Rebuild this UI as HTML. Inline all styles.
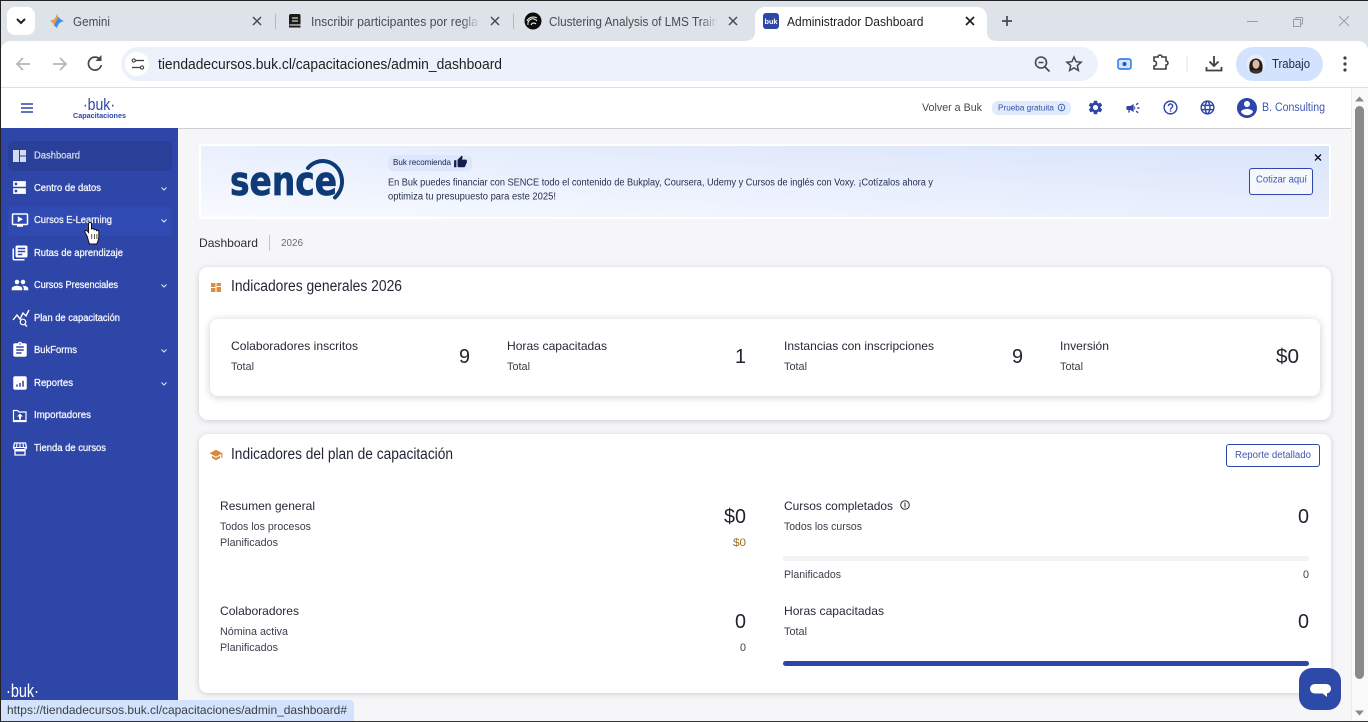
<!DOCTYPE html>
<html lang="es"><head><meta charset="utf-8"><title>Administrador Dashboard</title>
<style>
html,body{margin:0;padding:0;width:1368px;height:722px;overflow:hidden;background:#fff}
svg{display:block}
text{font-family:"Liberation Sans",sans-serif;white-space:pre}
.s{font-size:10px;font-weight:400;fill:#f2f4fc;stroke:#f2f4fc;stroke-width:.3px}
.l{font-size:12px;fill:#252a38}
.m{font-size:10.8px;fill:#3b3f4b}
.n{font-size:20px;fill:#20242e}
.tab{font-size:13px;fill:#4a4c50}
</style></head><body>
<svg width="1368" height="722" viewBox="0 0 1368 722" xmlns="http://www.w3.org/2000/svg">
<defs>
<linearGradient id="bn" x1="0" y1="1" x2="1" y2="0"><stop offset="0" stop-color="#f8faff"/><stop offset="1" stop-color="#d9e4fb"/></linearGradient>
<linearGradient id="fade1"><stop offset="0" stop-color="#dee3ea" stop-opacity="0"/><stop offset="1" stop-color="#dee3ea"/></linearGradient>
</defs>
<!-- tab strip -->
<rect width="1368" height="722" fill="#dee3ea"/>
<rect x="0" y="0" width="1368" height="1" fill="#222"/>
<rect x="1" y="41" width="1367" height="47" fill="#fff"/>
<path d="M1 41h10a10 10 0 0 0-10 8z" fill="#dee3ea"/>
<path d="M1368 41h-10a10 10 0 0 1 10 8z" fill="#dee3ea"/>
<rect x="7" y="7" width="28" height="28" rx="8" fill="#fff"/>
<path d="M17 19l4 4 4-4" fill="none" stroke="#1f1f1f" stroke-width="2"/>
<!-- gemini -->
<path d="M57 14c.8 4 3 6.200 7 7-4 .8-6.200 3-7 7-.8-4-3-6.200-7-7 4-.8 6.200-3 7-7z" fill="#3d8ef0"/>
<path d="M57 14c.8 2 1 2.500 1.500 3L54 25.500c-.8-2-2-3.800-4-4.500 4-.8 6.200-3 7-7z" fill="#ef9a3c"/>
<path d="M58.500 17l-4.500 8.500 3 2.500c.8-4 3-6.200 7-7-2-.5-4-2-5.500-4z" fill="#3d8ef0"/>
<text class="tab" x="73" y="26" textLength="37" lengthAdjust="spacingAndGlyphs">Gemini</text>
<path d="M253 17l8 8m0-8l-8 8" stroke="#4a4c50" stroke-width="1.500"/>
<rect x="275" y="14" width="1" height="15" fill="#b5b9bf"/>
<!-- notebook tab -->
<path d="M291 14h8a1.500 1.500 0 0 1 1.500 1.500V27.500h-11.500v-11.500a2 2 0 0 1 2-2z" fill="#1a1a1a"/>
<path d="M292 18h6M292 21h6M289.500 25h11" stroke="#fff" stroke-width="1.100"/>
<text class="tab" x="311" y="26" textLength="173" lengthAdjust="spacingAndGlyphs">Inscribir participantes por reglas</text>
<rect x="462" y="12" width="18" height="20" fill="url(#fade1)"/><rect x="479" y="12" width="12" height="20" fill="#dee3ea"/>
<path d="M491 17l8 8m0-8l-8 8" stroke="#4a4c50" stroke-width="1.500"/>
<rect x="513" y="14" width="1" height="15" fill="#b5b9bf"/>
<!-- clustering tab -->
<circle cx="533" cy="21" r="8.500" fill="#0b0b0b"/>
<path d="M528 25a5 5 0 0 1 9-4M531 25a3 3 0 0 1 5-1M527 21a7 7 0 0 1 10-3" fill="none" stroke="#fff" stroke-width="1"/>
<text class="tab" x="549" y="26" textLength="185" lengthAdjust="spacingAndGlyphs">Clustering Analysis of LMS Training</text>
<rect x="700" y="12" width="18" height="20" fill="url(#fade1)"/><rect x="717" y="12" width="20" height="20" fill="#dee3ea"/>
<path d="M729 17l8 8m0-8l-8 8" stroke="#4a4c50" stroke-width="1.500"/>
<!-- active tab -->
<path d="M745 41c6 0 10-3 10-9v-15a10 10 0 0 1 10-10h212a10 10 0 0 1 10 10v15c0 6 4 9 10 9z" fill="#fff"/>
<rect x="763" y="13" width="16" height="16" rx="3" fill="#2e46a7"/>
<text x="764.500" y="24" font-size="7.500" font-weight="700" fill="#fff" textLength="13" lengthAdjust="spacingAndGlyphs">buk</text>
<text x="787" y="26" font-size="13" fill="#1f1f1f" textLength="136.500" lengthAdjust="spacingAndGlyphs">Administrador Dashboard</text>
<path d="M966 17l8 8m0-8l-8 8" stroke="#1f1f1f" stroke-width="1.700"/>
<path d="M1002 21h10M1007 16v10" stroke="#4d4453" stroke-width="1.700"/>
<!-- window controls -->
<rect x="1247" y="21" width="11" height="1" fill="#9a9da2"/>
<path d="M1293.500 19.500h7v7h-7zM1296 19v-1.500h6.500v6.500h-2" fill="none" stroke="#9a9da2"/>
<path d="M1339 16l10 10m0-10l-10 10" stroke="#9a9da2"/>
<!-- toolbar -->
<path d="M30 64H17m6-6l-6 6 6 6" fill="none" stroke="#b3b6bb" stroke-width="1.700"/>
<path d="M53 64h13m-6-6l6 6-6 6" fill="none" stroke="#b3b6bb" stroke-width="1.700"/>
<path d="M100 59.500a6.500 6.500 0 1 0 1.300 5.500" fill="none" stroke="#45474a" stroke-width="1.700"/><path d="M101.500 55v6h-6z" fill="#45474a"/>
<rect x="121" y="47" width="977" height="34" rx="17" fill="#ecf1fb"/>
<circle cx="137" cy="64" r="12" fill="#fff"/>
<path d="M135.500 60.500h8.500M132 67.500h8" stroke="#3c3f44" stroke-width="1.200"/>
<circle cx="133.800" cy="60.500" r="1.600" fill="#fff" stroke="#3c3f44" stroke-width="1.100"/>
<circle cx="142" cy="67.500" r="1.600" fill="#fff" stroke="#3c3f44" stroke-width="1.100"/>
<text x="158" y="69" font-size="14.500" fill="#1f1f1f" textLength="344" lengthAdjust="spacingAndGlyphs">tiendadecursos.buk.cl/capacitaciones/admin_dashboard</text>
<circle cx="1041" cy="62.500" r="5.500" fill="none" stroke="#45474a" stroke-width="1.600"/><path d="M1038.500 62.500h5M1045 67l4.500 4.500" stroke="#45474a" stroke-width="1.600"/>
<path d="M1074 57l2.100 4.700 5 .5-3.800 3.300 1.100 5-4.400-2.600-4.400 2.600 1.100-5-3.800-3.300 5-.5z" fill="none" stroke="#45474a" stroke-width="1.500"/>
<rect x="1118" y="59" width="13" height="10" rx="2" fill="#d3e3fd" stroke="#1a73e8" stroke-width="1.400"/><circle cx="1124.500" cy="64" r="2" fill="#1a55c8"/>
<path d="M1154 58h4a2 2 0 0 1 4 0h4v4a2 2 0 0 1 0 4v4h-12v-3a2 2 0 0 0 0-5z" transform="translate(0 -1)" fill="none" stroke="#3c3f44" stroke-width="1.600"/>
<rect x="1186.500" y="56" width="1" height="16" fill="#d3e3fd"/>
<path d="M1214 56v10m-4.500-4.500l4.500 4.500 4.500-4.500M1206.500 67v3.500h15V67" fill="none" stroke="#3c3f44" stroke-width="1.800"/>
<rect x="1236" y="47" width="87" height="34" rx="17" fill="#d3e3fd"/>
<circle cx="1256" cy="64" r="9.500" fill="#e6eef6"/>
<path d="M1250 71c-1.500-5-1-12 6-12.500 6.500.5 7.500 7.500 6 12.500z" fill="#231a1a"/>
<ellipse cx="1256" cy="64.300" rx="3.500" ry="4.500" fill="#dcb8a4"/>
<path d="M1250 71.500c2-2 10-2 12 0a9.500 9.500 0 0 1-12 0z" fill="#3f3030"/>
<text x="1272" y="68" font-size="12.500" fill="#1d2a44" textLength="38" lengthAdjust="spacingAndGlyphs">Trabajo</text>
<circle cx="1345" cy="58" r="1.600" fill="#3c3f44"/><circle cx="1345" cy="64" r="1.600" fill="#3c3f44"/><circle cx="1345" cy="70" r="1.600" fill="#3c3f44"/>
<rect x="1" y="87" width="1367" height="1" fill="#dcdfe3"/>
<!-- page bg -->
<rect x="1" y="88" width="1350" height="634" fill="#f6f6f8"/>
<rect x="1" y="88" width="1350" height="40" fill="#fff"/>
<rect x="178" y="128" width="1173" height="1" fill="#cfcfd2"/>
<!-- header -->
<path d="M21 104h12M21 108h12M21 112h12" stroke="#2e46a7" stroke-width="1.500"/>
<text x="83" y="110" font-size="17" fill="#2e46a7" textLength="32" lengthAdjust="spacingAndGlyphs">·buk·</text>
<text x="73" y="118" font-size="7.500" font-weight="700" fill="#2e46a7" textLength="53" lengthAdjust="spacingAndGlyphs">Capacitaciones</text>
<text x="922" y="111" font-size="11" fill="#4b4650" textLength="60" lengthAdjust="spacingAndGlyphs">Volver a Buk</text>
<rect x="992" y="101" width="79" height="14" rx="6" fill="#dfeafb"/>
<text x="998" y="110.500" font-size="7.800" fill="#3a53ab" textLength="56" lengthAdjust="spacingAndGlyphs">Prueba gratuita</text>
<circle cx="1061.500" cy="107.500" r="3.300" fill="none" stroke="#3a53ab" stroke-width=".8"/><path d="M1061.500 106v3.500" stroke="#3a53ab" stroke-width=".8"/>
<g fill="#2e46a7">
<svg x="1087" y="99" width="17" height="17" viewBox="0 0 24 24"><path d="M19.140 12.940c.04-.3.06-.61.06-.94 0-.32-.02-.64-.07-.94l2.030-1.580c.18-.14.23-.41.12-.61l-1.920-3.320c-.12-.22-.37-.29-.59-.22l-2.390.96c-.5-.38-1.030-.7-1.620-.94l-.36-2.540c-.04-.24-.24-.41-.48-.41h-3.840c-.24 0-.43.17-.47.41l-.36 2.540c-.59.24-1.130.57-1.620.94l-2.390-.96c-.22-.08-.47 0-.59.22L2.740 8.870c-.12.21-.08.47.12.61l2.030 1.580c-.05.3-.09.63-.09.94s.02.64.07.94l-2.030 1.580c-.18.14-.23.41-.12.61l1.920 3.320c.12.22.37.29.59.22l2.390-.96c.5.38 1.030.7 1.620.94l.36 2.540c.05.24.24.41.48.41h3.840c.24 0 .44-.17.47-.41l.36-2.540c.59-.24 1.130-.56 1.620-.94l2.390.96c.22.08.47 0 .59-.22l1.920-3.320c.12-.22.07-.47-.12-.61l-2.010-1.580zM12 15.600c-1.980 0-3.600-1.620-3.600-3.600s1.620-3.600 3.600-3.600 3.600 1.620 3.600 3.600-1.620 3.600-3.600 3.600z"/></svg>
<svg x="1125" y="100" width="16" height="16" viewBox="0 0 24 24"><path d="M18 11v2h4v-2h-4zm-2 6.610c.96.71 2.210 1.650 3.200 2.390.4-.53.8-1.070 1.200-1.600-.99-.74-2.240-1.680-3.200-2.400-.4.54-.8 1.080-1.200 1.610zM20.400 5.600c-.4-.53-.8-1.070-1.200-1.600-.99.74-2.240 1.680-3.200 2.400.4.53.8 1.070 1.200 1.600.96-.72 2.210-1.650 3.200-2.400zM4 9c-1.100 0-2 .9-2 2v2c0 1.100.9 2 2 2h1v4h2v-4h1l5 3V6L8 9H4zm11.500 3c0-1.330-.58-2.530-1.500-3.350v6.690c.92-.81 1.500-2.010 1.500-3.340z"/></svg>
<svg x="1162" y="99" width="17" height="17" viewBox="0 0 24 24"><path d="M11 18h2v-2h-2v2zm1-16C6.480 2 2 6.480 2 12s4.480 10 10 10 10-4.480 10-10S17.520 2 12 2zm0 18c-4.410 0-8-3.590-8-8s3.590-8 8-8 8 3.590 8 8-3.590 8-8 8zm0-14c-2.210 0-4 1.790-4 4h2c0-1.100.9-2 2-2s2 .9 2 2c0 2-3 1.750-3 5h2c0-2.250 3-2.500 3-5 0-2.210-1.790-4-4-4z"/></svg>
<svg x="1199" y="99" width="17" height="17" viewBox="0 0 24 24"><path d="M11.990 2C6.470 2 2 6.480 2 12s4.470 10 9.990 10C17.520 22 22 17.520 22 12S17.520 2 11.990 2zm6.930 6h-2.950c-.32-1.250-.78-2.450-1.380-3.560 1.840.63 3.370 1.910 4.330 3.560zM12 4.040c.83 1.200 1.480 2.530 1.910 3.960h-3.820c.43-1.430 1.080-2.760 1.910-3.960zM4.260 14C4.100 13.360 4 12.690 4 12s.1-1.360.26-2h3.380c-.08.66-.14 1.320-.14 2 0 .68.06 1.340.14 2H4.260zm.82 2h2.950c.32 1.250.78 2.450 1.380 3.560-1.840-.63-3.370-1.900-4.330-3.560zm2.950-8H5.080c.96-1.660 2.490-2.930 4.330-3.560C8.810 5.550 8.350 6.750 8.030 8zM12 19.960c-.83-1.200-1.480-2.530-1.910-3.960h3.820c-.43 1.430-1.080 2.760-1.910 3.960zM14.340 14H9.660c-.09-.66-.16-1.320-.16-2 0-.68.07-1.350.16-2h4.680c.09.65.16 1.320.16 2 0 .68-.07 1.340-.16 2zm.25 5.560c.6-1.110 1.060-2.310 1.380-3.560h2.950c-.96 1.650-2.490 2.930-4.330 3.560zM16.360 14c.08-.66.14-1.320.14-2 0-.68-.06-1.340-.14-2h3.380c.16.64.26 1.310.26 2s-.1 1.360-.26 2h-3.380z"/></svg>
<svg x="1235" y="96" width="24" height="24" viewBox="0 0 24 24"><path d="M12 2C6.480 2 2 6.480 2 12s4.480 10 10 10 10-4.480 10-10S17.520 2 12 2zm0 3c1.660 0 3 1.340 3 3s-1.340 3-3 3-3-1.340-3-3 1.340-3 3-3zm0 14.200c-2.500 0-4.710-1.280-6-3.220.03-1.990 4-3.080 6-3.080 1.990 0 5.970 1.090 6 3.080-1.290 1.940-3.500 3.220-6 3.220z"/></svg>
</g>
<text x="1262" y="111" font-size="11.500" fill="#3f58ae" textLength="63" lengthAdjust="spacingAndGlyphs">B. Consulting</text>
<!-- sidebar -->
<rect x="1" y="128" width="177" height="594" fill="#2e46a7"/>
<rect x="8" y="141" width="164" height="30" rx="5" fill="#2a3f97"/>
<rect x="8" y="206" width="164" height="30" rx="5" fill="#304ab3"/>
<text class="s" x="34" y="158.500" textLength="46" lengthAdjust="spacingAndGlyphs" style="fill:#ccd3ec;stroke:#ccd3ec">Dashboard</text>
<text class="s" x="34" y="191" textLength="67" lengthAdjust="spacingAndGlyphs">Centro de datos</text>
<text class="s" x="34" y="223" textLength="78" lengthAdjust="spacingAndGlyphs">Cursos E-Learning</text>
<text class="s" x="34" y="256" textLength="89" lengthAdjust="spacingAndGlyphs">Rutas de aprendizaje</text>
<text class="s" x="34" y="288" textLength="84" lengthAdjust="spacingAndGlyphs">Cursos Presenciales</text>
<text class="s" x="34" y="321" textLength="86" lengthAdjust="spacingAndGlyphs">Plan de capacitación</text>
<text class="s" x="34" y="353" textLength="43" lengthAdjust="spacingAndGlyphs">BukForms</text>
<text class="s" x="34" y="386" textLength="39" lengthAdjust="spacingAndGlyphs">Reportes</text>
<text class="s" x="34" y="418" textLength="57" lengthAdjust="spacingAndGlyphs">Importadores</text>
<text class="s" x="34" y="451" textLength="72" lengthAdjust="spacingAndGlyphs">Tienda de cursos</text>
<g fill="none" stroke="#dfe4f5" stroke-width="1.100">
<path d="M161.500 187.500l2.500 2.500 2.500-2.500M161.500 219.500l2.500 2.500 2.500-2.500M161.500 284.500l2.500 2.500 2.500-2.500M161.500 349.500l2.500 2.500 2.500-2.500M161.500 382.500l2.500 2.500 2.500-2.500"/>
</g>
<path d="M13 150h6v12h-6zM20 150h6v5.500h-6zM20 156.500h6v5.500h-6z" fill="#d5daef"/>
<g fill="#fff">
<svg x="11" y="179" width="17" height="17" viewBox="0 0 24 24"><path d="M21 13H3v8h18zM7 19c-1.100 0-2-.9-2-2s.9-2 2-2 2 .9 2 2-.9 2-2 2zM21 3H3v8h18zM7 9c-1.100 0-2-.9-2-2s.9-2 2-2 2 .9 2 2-.9 2-2 2z"/></svg>
<svg x="11" y="211" width="18" height="18" viewBox="0 0 24 24"><path d="M21 3H3c-1.110 0-2 .89-2 2v12c0 1.100.89 2 2 2h5v2h8v-2h5c1.100 0 1.990-.9 1.990-2L23 5c0-1.110-.9-2-2-2zm0 14H3V5h18v12zm-5-6l-7 4V7z"/></svg>
<svg x="11" y="244" width="18" height="18" viewBox="0 0 24 24"><path d="M4 6H2v14c0 1.100.9 2 2 2h14v-2H4V6zm16-4H8c-1.100 0-2 .9-2 2v12c0 1.100.9 2 2 2h12c1.100 0 2-.9 2-2V4c0-1.100-.9-2-2-2zm-1 9H9V9h10v2zm-4 4H9v-2h6v2zm4-8H9V5h10v2z"/></svg>
<svg x="11" y="276" width="18" height="18" viewBox="0 0 24 24"><path d="M16 11c1.660 0 2.990-1.340 2.990-3S17.660 5 16 5c-1.660 0-3 1.340-3 3s1.340 3 3 3zm-8 0c1.660 0 2.990-1.340 2.990-3S9.660 5 8 5C6.340 5 5 6.340 5 8s1.340 3 3 3zm0 2c-2.330 0-7 1.170-7 3.500V19h14v-2.500c0-2.330-4.670-3.500-7-3.500zm8 0c-.29 0-.62.02-.97.05 1.160.84 1.970 1.970 1.970 3.450V19h6v-2.500c0-2.330-4.670-3.500-7-3.500z"/></svg>
<svg x="11" y="341" width="18" height="18" viewBox="0 0 24 24"><path d="M19 3h-4.180C14.400 1.840 13.300 1 12 1c-1.300 0-2.400.84-2.820 2H5c-1.100 0-2 .9-2 2v14c0 1.100.9 2 2 2h14c1.100 0 2-.9 2-2V5c0-1.100-.9-2-2-2zm-7 0c.55 0 1 .45 1 1s-.45 1-1 1-1-.45-1-1 .45-1 1-1zm2 14H7v-2h7v2zm3-4H7v-2h10v2zm0-4H7V7h10v2z"/></svg>
<svg x="11" y="374" width="18" height="18" viewBox="0 0 24 24"><path d="M19 3H5c-1.100 0-2 .9-2 2v14c0 1.100.9 2 2 2h14c1.100 0 2-.9 2-2V5c0-1.100-.9-2-2-2zM9 17H7v-3h2v3zm4 0h-2v-5h2v5zm4 0h-2V9h2v8z"/></svg>
</g>
<path d="M13 322l4-5 3 4 3-6 3 3 3-6" fill="none" stroke="#fff" stroke-width="1.400" transform="translate(0 -2)"/>
<circle cx="23" cy="322" r="2.800" fill="#2e46a7" stroke="#fff" stroke-width="1.200"/><path d="M25 324.500l2 2" stroke="#fff" stroke-width="1.400"/>
<path d="M13.500 410.500h4l1.500 1.500h7v9.500h-12.500z" fill="none" stroke="#fff" stroke-width="1.200"/><path d="M20 413.500l3 3h-2v3h-2v-3h-2z" fill="#fff"/><rect x="13.500" y="420" width="12.500" height="1.500" fill="#fff"/>
<path d="M14.500 443h11l1 4.500c0 1-.8 1.500-1.500 1.500v6H15v-6c-.7 0-1.500-.5-1.500-1.500z" fill="none" stroke="#fff" stroke-width="1.300"/><path d="M13.500 447.500h13M17 443.500l-.5 4M20 443.500v4M23 443.500l.5 4" stroke="#fff" stroke-width="1.100"/><rect x="15" y="449" width="10" height="2.500" fill="#fff"/>
<text x="6" y="697" font-size="18" fill="#fff" textLength="33" lengthAdjust="spacingAndGlyphs">·buk·</text>
<!-- banner -->
<rect x="199" y="144" width="1132" height="75" rx="2" fill="#fff"/>
<rect x="201" y="146" width="1128" height="71" fill="url(#bn)"/>
<text x="230" y="195" font-size="40" font-weight="700" fill="#0e3b75" stroke="#0e3b75" stroke-width=".7" textLength="107" lengthAdjust="spacingAndGlyphs" style="font-family:'DejaVu Sans',sans-serif">sence</text>
<path d="M308 168a19 19 0 0 1 33 7c2.500 8 .5 16-6 22.500" fill="none" stroke="#0e3b75" stroke-width="4" stroke-linecap="round"/>
<rect x="388" y="155" width="84" height="16" rx="5" fill="#dde6fb"/>
<text x="393" y="165" font-size="8.500" fill="#18224a" textLength="58" lengthAdjust="spacingAndGlyphs">Buk recomienda</text>
<svg x="453.500" y="155" width="14" height="14" viewBox="0 0 24 24"><path fill="#121d4c" d="M1 21h4V9H1v12zm22-11c0-1.100-.9-2-2-2h-6.310l.95-4.570.03-.32c0-.41-.17-.79-.44-1.060L14.170 1 7.590 7.590C7.220 7.950 7 8.450 7 9v10c0 1.100.9 2 2 2h9c.83 0 1.540-.5 1.840-1.220l3.020-7.050c.09-.23.14-.47.14-.73v-2z"/></svg>
<text x="388" y="185.500" font-size="10" fill="#25304f" textLength="545" lengthAdjust="spacingAndGlyphs">En Buk puedes financiar con SENCE todo el contenido de Bukplay, Coursera, Udemy y Cursos de inglés con Voxy. ¡Cotízalos ahora y</text>
<text x="388" y="199.500" font-size="10" fill="#25304f" textLength="168" lengthAdjust="spacingAndGlyphs">optimiza tu presupuesto para este 2025!</text>
<path d="M1315 154.500l6 6m0-6l-6 6" stroke="#111" stroke-width="1.300"/>
<rect x="1249.500" y="168.500" width="63" height="26" rx="2.500" fill="#f6f7fc" stroke="#2e46a7"/>
<text x="1256" y="182.500" font-size="10" fill="#3f58ae" textLength="51" lengthAdjust="spacingAndGlyphs">Cotizar aquí</text>
<!-- breadcrumb -->
<text x="199" y="247" font-size="12" fill="#2a2d36" textLength="59" lengthAdjust="spacingAndGlyphs">Dashboard</text>
<rect x="269" y="235" width="1" height="16" fill="#c5c6ca"/>
<text x="281" y="246" font-size="9.800" fill="#6c6a70" textLength="22" lengthAdjust="spacingAndGlyphs">2026</text>
<!-- card 1 -->
<rect x="199" y="267" width="1132" height="153" rx="9" fill="#fff" style="filter:drop-shadow(0 1px 3px rgba(0,0,0,.16))"/>
<path d="M211 283h4.500v4H211zM216.500 283h4.500v3h-4.500zM216.500 287h4.500v5h-4.500zM211 288h4.500v4H211z" fill="#dc8f40"/>
<text x="231" y="291" font-size="15.300" fill="#222737" textLength="171" lengthAdjust="spacingAndGlyphs">Indicadores generales 2026</text>
<rect x="210" y="319" width="1110" height="77" rx="8" fill="#fff" style="filter:drop-shadow(0 1px 4px rgba(0,0,0,.2))"/>
<text class="l" x="231" y="350" textLength="127" lengthAdjust="spacingAndGlyphs">Colaboradores inscritos</text>
<text class="m" x="231" y="370" textLength="23" lengthAdjust="spacingAndGlyphs">Total</text>
<text class="n" x="459" y="363" textLength="11" lengthAdjust="spacingAndGlyphs">9</text>
<text class="l" x="507" y="350" textLength="100" lengthAdjust="spacingAndGlyphs">Horas capacitadas</text>
<text class="m" x="507" y="370" textLength="23" lengthAdjust="spacingAndGlyphs">Total</text>
<text class="n" x="735" y="363" textLength="11" lengthAdjust="spacingAndGlyphs">1</text>
<text class="l" x="784" y="350" textLength="150" lengthAdjust="spacingAndGlyphs">Instancias con inscripciones</text>
<text class="m" x="784" y="370" textLength="23" lengthAdjust="spacingAndGlyphs">Total</text>
<text class="n" x="1012" y="363" textLength="11" lengthAdjust="spacingAndGlyphs">9</text>
<text class="l" x="1060" y="350" textLength="49" lengthAdjust="spacingAndGlyphs">Inversión</text>
<text class="m" x="1060" y="370" textLength="23" lengthAdjust="spacingAndGlyphs">Total</text>
<text class="n" x="1276" y="363" textLength="23" lengthAdjust="spacingAndGlyphs">$0</text>
<!-- card 2 -->
<rect x="199" y="434" width="1132" height="259" rx="9" fill="#fff" style="filter:drop-shadow(0 1px 3px rgba(0,0,0,.16))"/>
<svg x="209" y="448" width="14" height="14" viewBox="0 0 24 24"><path fill="#d98a3c" d="M5 13.180v4L12 21l7-3.820v-4L12 17l-7-3.820zM12 3L1 9l11 6 9-4.910V17h2V9L12 3z"/></svg>
<text x="231" y="459" font-size="15.300" fill="#222737" textLength="222" lengthAdjust="spacingAndGlyphs">Indicadores del plan de capacitación</text>
<rect x="1226.500" y="444.500" width="93" height="22" rx="2.500" fill="#fff" stroke="#2e46a7"/>
<text x="1235" y="458" font-size="9.800" fill="#3f58ae" textLength="76" lengthAdjust="spacingAndGlyphs">Reporte detallado</text>
<text class="l" x="220" y="510" textLength="95" lengthAdjust="spacingAndGlyphs">Resumen general</text>
<text class="m" x="220" y="530" textLength="91" lengthAdjust="spacingAndGlyphs">Todos los procesos</text>
<text class="m" x="220" y="546" textLength="58" lengthAdjust="spacingAndGlyphs">Planificados</text>
<text class="n" x="724" y="523" textLength="22" lengthAdjust="spacingAndGlyphs">$0</text>
<text class="m" x="733" y="546" textLength="13" lengthAdjust="spacingAndGlyphs" style="fill:#9c6a1e">$0</text>
<text class="l" x="220" y="615" textLength="79" lengthAdjust="spacingAndGlyphs">Colaboradores</text>
<text class="m" x="220" y="635" textLength="68" lengthAdjust="spacingAndGlyphs">Nómina activa</text>
<text class="m" x="220" y="651" textLength="58" lengthAdjust="spacingAndGlyphs">Planificados</text>
<text class="n" x="735" y="628" textLength="11" lengthAdjust="spacingAndGlyphs">0</text>
<text class="m" x="740" y="651" textLength="6" lengthAdjust="spacingAndGlyphs">0</text>
<text class="l" x="784" y="510" textLength="109" lengthAdjust="spacingAndGlyphs">Cursos completados</text>
<circle cx="905" cy="505" r="4.300" fill="none" stroke="#2a2d36"/><path d="M905 502.500v5" stroke="#2a2d36"/>
<text class="m" x="784" y="530" textLength="78" lengthAdjust="spacingAndGlyphs">Todos los cursos</text>
<text class="n" x="1298" y="523" textLength="11" lengthAdjust="spacingAndGlyphs">0</text>
<rect x="783" y="556" width="526" height="5" rx="2" fill="#f3f3f5"/>
<text class="m" x="784" y="578" textLength="57" lengthAdjust="spacingAndGlyphs">Planificados</text>
<text class="m" x="1303" y="578" textLength="6" lengthAdjust="spacingAndGlyphs">0</text>
<text class="l" x="784" y="615" textLength="100" lengthAdjust="spacingAndGlyphs">Horas capacitadas</text>
<text class="m" x="784" y="635" textLength="23" lengthAdjust="spacingAndGlyphs">Total</text>
<text class="n" x="1298" y="628" textLength="11" lengthAdjust="spacingAndGlyphs">0</text>
<rect x="783" y="661" width="526" height="5" rx="2.500" fill="#2e46a7"/>
<!-- scrollbar -->
<rect x="1351" y="88" width="17" height="634" fill="#fafafa"/>
<rect x="1351" y="88" width="1" height="634" fill="#ececec"/>
<path d="M1355 101.500l4.500-5 4.500 5z" fill="#8a8a8a"/>
<rect x="1355" y="106" width="9" height="573" rx="4.500" fill="#8a8a8a"/>
<path d="M1355 710.500l4.500 5 4.500-5z" fill="#8a8a8a"/>
<!-- chat -->
<rect x="1299" y="668" width="42" height="42" rx="13" fill="#2e4aa8"/>
<rect x="1310" y="684" width="21" height="9.500" rx="4.700" fill="#fff"/>
<path d="M1322 693l5 0v4z" fill="#fff"/>
<!-- status -->
<path d="M1 700h349a4 4 0 0 1 4 4v17H1z" fill="#d3e3fd"/>
<text x="7" y="714" font-size="12" fill="#3c4043" textLength="340" lengthAdjust="spacingAndGlyphs">https://tiendadecursos.buk.cl/capacitaciones/admin_dashboard#</text>
<!-- cursor -->
<path d="M87.500 237l-2.500-4.500c-.8-1.600 1.200-2.800 2.300-1.500l1.200 1.500V224c0-2.200 3-2.200 3 0v5.500c0-1.400 2.600-1.400 2.600 0v.8c0-1.300 2.500-1.300 2.500 0v.9c0-1.100 2.200-1.100 2.200.3v5c0 3-1 5.200-2 7.500h-7.300c-1.100-2.600-1.300-4.400-2-6.500z" fill="#fff" stroke="#111" stroke-width="1"/>
<path d="M91.800 234v5M94.400 234v5M96.900 234v5" stroke="#111" stroke-width=".7"/>
<!-- window edges -->
<rect x="0" y="0" width="1" height="722" fill="#222"/>
<rect x="0" y="721" width="1368" height="1" fill="#333"/>
</svg>
</body></html>
